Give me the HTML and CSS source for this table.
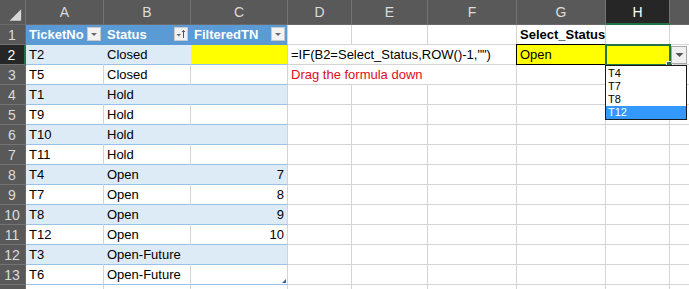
FILE: index.html
```html
<!DOCTYPE html>
<html>
<head>
<meta charset="utf-8">
<link rel="stylesheet" href="styles.css">
</head>
<body>
<div class="sheet">
  <!-- column headers -->
  <div class="hd corner"><svg width="26" height="25" viewBox="0 0 26 25"><polygon points="10,21 22,21 22,9" fill="#d8d8d8"/></svg></div>
  <div class="hd col">A</div>
  <div class="hd col">B</div>
  <div class="hd col">C</div>
  <div class="hd col">D</div>
  <div class="hd col">E</div>
  <div class="hd col">F</div>
  <div class="hd col">G</div>
  <div class="hd col on">H</div>
  <div class="hd col"></div>

  <!-- row 1 -->
  <div class="hd rn">1</div>
  <div class="c th">TicketNo<span class="fb"><svg width="12" height="12" viewBox="0 0 12 12"><polygon points="3,5 9,5 6,8" fill="#6b6b6b"/></svg></span></div>
  <div class="c th">Status<span class="fb"><svg width="12" height="12" viewBox="0 0 12 12"><polygon points="1.5,6 6,6 3.75,8.5" fill="#6b6b6b"/><path d="M8.5 10V2.5M7 4L8.5 2.3L10 4" stroke="#555" stroke-width="1" fill="none"/></svg></span></div>
  <div class="c th last">FilteredTN<span class="fb"><svg width="12" height="12" viewBox="0 0 12 12"><polygon points="3,5 9,5 6,8" fill="#6b6b6b"/></svg></span></div>
  <div class="c"></div>
  <div class="c"></div>
  <div class="c"></div>
  <div class="c b">Select_Status</div>
  <div class="c"></div>
  <div class="c"></div>

  <!-- row 2 -->
  <div class="hd rn on">2</div>
  <div class="c band">T2</div>
  <div class="c band">Closed</div>
  <div class="c band last yel"></div>
  <div class="c wide">=IF(B2=Select_Status,ROW()-1,"")</div>
  <div class="c yel boxed">Open</div>
  <div class="c yel"></div>
  <div class="c"></div>

  <!-- row 3 -->
  <div class="hd rn">3</div>
  <div class="c tb">T5</div>
  <div class="c tb">Closed</div>
  <div class="c tb last"></div>
  <div class="c wide red">Drag the formula down</div>
  <div class="c"></div>
  <div class="c"></div>
  <div class="c"></div>

  <!-- row 4 -->
  <div class="hd rn">4</div>
  <div class="c band">T1</div>
  <div class="c band">Hold</div>
  <div class="c band last"></div>
  <div class="c"></div><div class="c"></div><div class="c"></div><div class="c"></div><div class="c"></div><div class="c"></div>

  <!-- row 5 -->
  <div class="hd rn">5</div>
  <div class="c tb">T9</div>
  <div class="c tb">Hold</div>
  <div class="c tb last"></div>
  <div class="c"></div><div class="c"></div><div class="c"></div><div class="c"></div><div class="c"></div><div class="c"></div>

  <!-- row 6 -->
  <div class="hd rn">6</div>
  <div class="c band">T10</div>
  <div class="c band">Hold</div>
  <div class="c band last"></div>
  <div class="c"></div><div class="c"></div><div class="c"></div><div class="c"></div><div class="c"></div><div class="c"></div>

  <!-- row 7 -->
  <div class="hd rn">7</div>
  <div class="c tb">T11</div>
  <div class="c tb">Hold</div>
  <div class="c tb last"></div>
  <div class="c"></div><div class="c"></div><div class="c"></div><div class="c"></div><div class="c"></div><div class="c"></div>

  <!-- row 8 -->
  <div class="hd rn">8</div>
  <div class="c band">T4</div>
  <div class="c band">Open</div>
  <div class="c band last num">7</div>
  <div class="c"></div><div class="c"></div><div class="c"></div><div class="c"></div><div class="c"></div><div class="c"></div>

  <!-- row 9 -->
  <div class="hd rn">9</div>
  <div class="c tb">T7</div>
  <div class="c tb">Open</div>
  <div class="c tb last num">8</div>
  <div class="c"></div><div class="c"></div><div class="c"></div><div class="c"></div><div class="c"></div><div class="c"></div>

  <!-- row 10 -->
  <div class="hd rn">10</div>
  <div class="c band">T8</div>
  <div class="c band">Open</div>
  <div class="c band last num">9</div>
  <div class="c"></div><div class="c"></div><div class="c"></div><div class="c"></div><div class="c"></div><div class="c"></div>

  <!-- row 11 -->
  <div class="hd rn">11</div>
  <div class="c tb">T12</div>
  <div class="c tb">Open</div>
  <div class="c tb last num">10</div>
  <div class="c"></div><div class="c"></div><div class="c"></div><div class="c"></div><div class="c"></div><div class="c"></div>

  <!-- row 12 -->
  <div class="hd rn">12</div>
  <div class="c band">T3</div>
  <div class="c band">Open-Future</div>
  <div class="c band last"></div>
  <div class="c"></div><div class="c"></div><div class="c"></div><div class="c"></div><div class="c"></div><div class="c"></div>

  <!-- row 13 -->
  <div class="hd rn">13</div>
  <div class="c tb end">T6</div>
  <div class="c tb end">Open-Future</div>
  <div class="c tb end last grip"></div>
  <div class="c"></div><div class="c"></div><div class="c"></div><div class="c"></div><div class="c"></div><div class="c"></div>

  <!-- row 14, only its top edge shows -->
  <div class="hd rn"></div>
  <div class="c"></div><div class="c"></div><div class="c"></div><div class="c"></div><div class="c"></div><div class="c"></div><div class="c"></div><div class="c"></div><div class="c"></div>

  <!-- active cell H2 with its validation dropdown -->
  <div class="active"><span class="handle"></span></div>
  <div class="ddbtn"><svg width="9" height="6" viewBox="0 0 9 6"><polygon points="0.5,1 8.5,1 4.5,5" fill="#555"/></svg></div>
  <ul class="ddlist">
    <li>T4</li>
    <li>T7</li>
    <li>T8</li>
    <li class="hi">T12</li>
  </ul>
</div>
</body>
</html>
```
FILE: styles.css
```css
html, body {
  margin: 0;
  padding: 0;
  background: #ffffff;
  overflow: hidden;
}

.sheet {
  position: relative;
  display: grid;
  grid-template-columns: 26px 78px 87px 97px 64px 76px 89px 89px 64px 40px;
  grid-template-rows: 25px repeat(14, 20px);
  font-family: "Liberation Sans", Arial, sans-serif;
  font-size: 13px;
  color: #000;
  width: 689px;
  height: 289px;
  overflow: hidden;
}

/* headers */
.hd {
  box-sizing: border-box;
  background: #595959;
  color: #dcdcdc;
  font-size: 14px;
  display: flex;
  align-items: center;
  justify-content: center;
}
.col {
  border-right: 1px solid #747474;
  border-bottom: 1px solid #6a6a6a;
}
.rn {
  border-bottom: 1px solid #747474;
  border-right: 1px solid #6a6a6a;
  padding-right: 1px;
}
.corner {
  border-right: 1px solid #747474;
  border-bottom: 1px solid #6a6a6a;
}
.corner svg { display: block; }
.hd.on {
  background: #262626;
  color: #ffffff;
}
.col.on { border-bottom: 2px solid #217346; }
.rn.on { border-right: 2px solid #217346; }

/* cells */
.c {
  box-sizing: border-box;
  border-right: 1px solid #d4d4d4;
  border-bottom: 1px solid #d4d4d4;
  padding: 0 3px;
  line-height: 20px;
  white-space: nowrap;
  position: relative;
}
.c.b { font-weight: bold; }
.c.num { text-align: right; }
.c.wide { grid-column: span 3; overflow: visible; }
.c.red { color: #e00d1b; }

/* table */
.th {
  background: #5b9bd5;
  color: #ffffff;
  font-weight: bold;
  border-right-color: #5b9bd5;
  border-bottom-color: #5b9bd5;
}
.band {
  background: #ddebf7;
  border-right-color: #ddebf7;
  border-bottom-color: #9bc2e6;
}
.tb { border-bottom-color: #9bc2e6; }
.c.last { border-right-color: #d4d4d4; }
.c.th.last { border-right-color: #d4d4d4; }
.c.end { border-bottom-color: #9bc2e6; }
.c.yel { background: #ffff00; }
.c.band.yel { border-right-color: #d4d4d4; }

.fb {
  position: absolute;
  right: 2px;
  top: 2px;
  width: 14px;
  height: 14px;
  box-sizing: border-box;
  background: #f2f2f2;
  border: 1px solid #c9c9c9;
  display: flex;
  align-items: center;
  justify-content: center;
}
.fb svg { display: block; }

.grip::after {
  content: "";
  position: absolute;
  right: 1px;
  bottom: 1px;
  width: 0;
  height: 0;
  border-left: 4px solid transparent;
  border-bottom: 4px solid #3f5ea8;
}

.boxed::after {
  content: "";
  position: absolute;
  left: -1px;
  top: -1px;
  right: -1px;
  bottom: -1px;
  border: 1px solid #000;
}

/* active cell */
.active {
  position: absolute;
  left: 605px;
  top: 44px;
  width: 66px;
  height: 22px;
  box-sizing: border-box;
  border: 2px solid #217346;
}
.handle {
  position: absolute;
  right: -4px;
  bottom: -4px;
  width: 5px;
  height: 5px;
  background: #217346;
  border: 1px solid #ffffff;
}
.ddbtn {
  position: absolute;
  left: 671px;
  top: 46px;
  width: 16px;
  height: 18px;
  box-sizing: border-box;
  background: #f0f0f0;
  border: 1px solid #a9a9a9;
  display: flex;
  align-items: center;
  justify-content: center;
}
.ddbtn svg { display: block; }

.ddlist {
  position: absolute;
  left: 605px;
  top: 65px;
  width: 82px;
  margin: 0;
  padding: 1px 0 0;
  list-style: none;
  box-sizing: border-box;
  background: #ffffff;
  border: 1px solid #1a1a1a;
  font-family: "Liberation Sans", Arial, sans-serif;
  font-size: 11px;
}
.ddlist li {
  height: 13px;
  line-height: 13px;
  padding-left: 2px;
}
.ddlist li.hi {
  background: #3399ff;
  color: #ffffff;
}
```
